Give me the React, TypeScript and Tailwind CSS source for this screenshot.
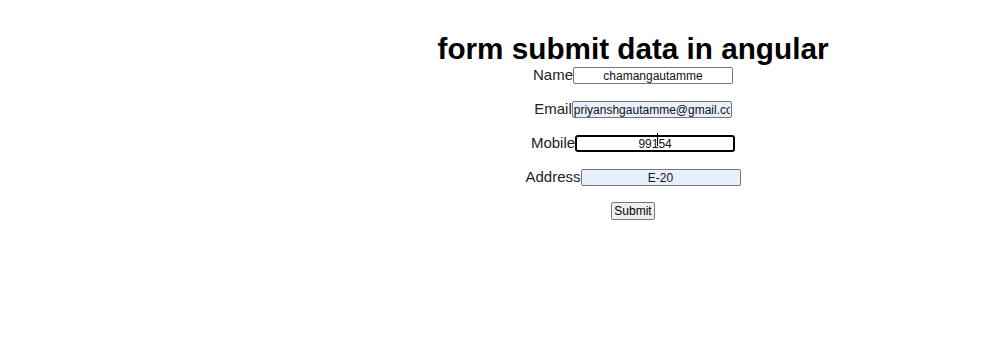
import React from "react";

const font = { fontFamily: '"Liberation Sans", Arial, sans-serif' };

function Row({
  label,
  value,
  inputClass,
  caretAt,
}: {
  label: string;
  value: string;
  inputClass: string;
  caretAt?: number;
}) {
  return (
    <div className="flex items-center h-[17px]">
      <label className="text-[15px] leading-[17px] text-[#222]">{label}</label>
      <div className="relative">
        <input
          readOnly
          defaultValue={value}
          className={`w-[160px] h-[17px] px-[1px] text-center text-[12px] leading-[15px] text-[#111] outline-none ${inputClass}`}
        />
        {caretAt !== undefined && (
          <span
            className="absolute top-[2px] w-px h-[13px] bg-black"
            style={{ left: caretAt }}
          />
        )}
      </div>
    </div>
  );
}

export default function App() {
  return (
    <div className="w-[1000px] h-[362px] bg-white overflow-hidden" style={font}>
      <div className="flex flex-col items-center pl-[266px] pt-[32px]">
        <h1 className="text-[29.7px] leading-[34px] font-bold text-black">
          form submit data in angular
        </h1>
        <div className="flex flex-col items-center gap-[17px]">
          <Row
            label="Name"
            value="chamangautamme"
            inputClass="border border-[#767676] rounded-[2px] bg-white"
          />
          <Row
            label="Email"
            value="priyanshgautamme@gmail.com"
            inputClass="border border-[#767676] rounded-[2px] bg-[#e8f0fe] !text-left"
          />
          <Row
            label="Mobile"
            value="99154"
            inputClass="border-2 border-black rounded-[3px] bg-white"
            caretAt={82}
          />
          <Row
            label="Address"
            value="E-20"
            inputClass="border border-[#767676] rounded-[2px] bg-[#e8f0fe]"
          />
          <button className="h-[18px] px-[2px] text-[12px] leading-[14px] text-black bg-[#efefef] border border-[#767676] rounded-[2px]">
            Submit
          </button>
        </div>
      </div>
    </div>
  );
}
